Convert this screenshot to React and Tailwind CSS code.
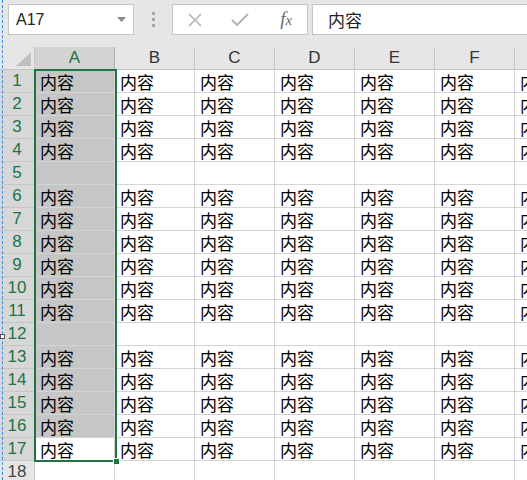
import React from 'react';

const cols = ['A', 'B', 'C', 'D', 'E', 'F', 'G'];
const emptyRows = new Set([5, 12, 18]);
const rows = Array.from({ length: 18 }, (_, i) => i + 1);

function Toolbar() {
  return (
    <div className="h-[47px] bg-[#e6e6e6] flex items-start pt-[4px] pl-[8px] gap-0">
      <div className="w-[126px] h-[31px] bg-white border border-[#c6c6c6] flex items-center justify-between pl-[7px] pr-[7px]">
        <span className="text-[16px] text-[#222]" style={{ fontFamily: '"Liberation Sans", sans-serif' }}>A17</span>
        <svg width="9" height="5" viewBox="0 0 9 5"><path d="M0 0h9L4.5 5z" fill="#8a8a8a" /></svg>
      </div>
      <div className="w-[38px] h-[31px] flex flex-col items-center justify-center gap-[3px]">
        <div className="w-[3px] h-[3px] bg-[#a6a6a6]" />
        <div className="w-[3px] h-[3px] bg-[#a6a6a6]" />
        <div className="w-[3px] h-[3px] bg-[#a6a6a6]" />
      </div>
      <div className="w-[136px] h-[31px] bg-white border border-[#c6c6c6] flex items-center">
        <div className="w-[45px] flex justify-center">
          <svg width="16" height="16" viewBox="0 0 16 16"><path d="M2 2l12 12M14 2L2 14" stroke="#b4b4b4" strokeWidth="1.6" fill="none" /></svg>
        </div>
        <div className="w-[45px] flex justify-center">
          <svg width="18" height="16" viewBox="0 0 18 16"><path d="M1 8l5 5L17 2" stroke="#b4b4b4" strokeWidth="2" fill="none" /></svg>
        </div>
        <div className="w-[45px] flex justify-center pl-[3px]">
          <span className="text-[19px] italic text-[#6a6a6a]" style={{ fontFamily: '"Liberation Serif", serif' }}>
            f<span className="text-[15px]">x</span>
          </span>
        </div>
      </div>
      <div className="ml-[4px] flex-1 h-[31px] bg-white border border-[#c6c6c6] border-r-0 flex items-center pl-[15px]">
        <span className="text-[17px] text-[#222]" style={{ fontFamily: '"Noto Sans CJK SC", sans-serif' }}>内容</span>
      </div>
    </div>
  );
}

function HeaderRow() {
  return (
    <div className="flex h-[23px]">
      <div className="w-[35px] shrink-0 bg-[#e6e6e6] border-r border-b border-[#c6c6c6] relative">
        <svg className="absolute right-[3px] bottom-[3px]" width="15" height="14" viewBox="0 0 15 14"><path d="M15 0v14H0z" fill="#bfbfbf" /></svg>
      </div>
      {cols.map((c) => (
        <div
          key={c}
          className={`w-[80px] shrink-0 border-r border-b flex items-center justify-center text-[17px] ${
            c === 'A' ? 'bg-[#d3d3d3] text-[#217346] border-b-[#217346] border-r-[#ababab]' : 'bg-[#e6e6e6] text-[#333] border-[#c6c6c6]'
          }`}
          style={{ fontFamily: '"Liberation Sans", sans-serif' }}
        >
          {c}
        </div>
      ))}
    </div>
  );
}

function Row({ n }) {
  const selected = n <= 17;
  const empty = emptyRows.has(n);
  return (
    <div className="flex h-[23px]">
      <div
        className={`w-[35px] shrink-0 border-r border-b border-[#c6c6c6] flex items-center justify-center text-[17px] ${
          selected ? 'bg-[#d7d7d7] text-[#217346]' : 'bg-[#e6e6e6] text-[#444]'
        }`}
        style={{ fontFamily: '"Liberation Sans", sans-serif' }}
      >
        {n}
      </div>
      {cols.map((c) => {
        const shaded = c === 'A' && n <= 16;
        return (
          <div
            key={c}
            className={`w-[80px] shrink-0 border-r border-b border-[#d4d4d4] flex items-center pl-[5px] text-[17px] leading-none text-black overflow-hidden whitespace-nowrap ${
              shaded ? 'bg-[#c6c6c6]' : 'bg-white'
            }`}
            style={{ fontFamily: '"Noto Sans CJK SC", sans-serif' }}
          >
            {empty ? '' : '内容'}
          </div>
        );
      })}
    </div>
  );
}

export default function App() {
  return (
    <div className="w-[527px] h-[480px] overflow-hidden bg-white relative">
      <Toolbar />
      <div className="relative">
        <HeaderRow />
        {rows.map((n) => (
          <Row key={n} n={n} />
        ))}
        <div className="absolute left-[34px] top-[22px] w-[83px] h-[393px] border-2 border-[#217346] pointer-events-none" />
        <div className="absolute left-[113px] top-[411px] w-[7px] h-[7px] bg-[#217346] border border-white" />
      </div>
      <div className="absolute left-[2px] top-0 h-[480px] border-l border-dashed border-[#3a8ee6]" />
      <div className="absolute left-0 top-[334px] w-[5px] h-[5px] bg-white border border-[#555]" />
    </div>
  );
}
